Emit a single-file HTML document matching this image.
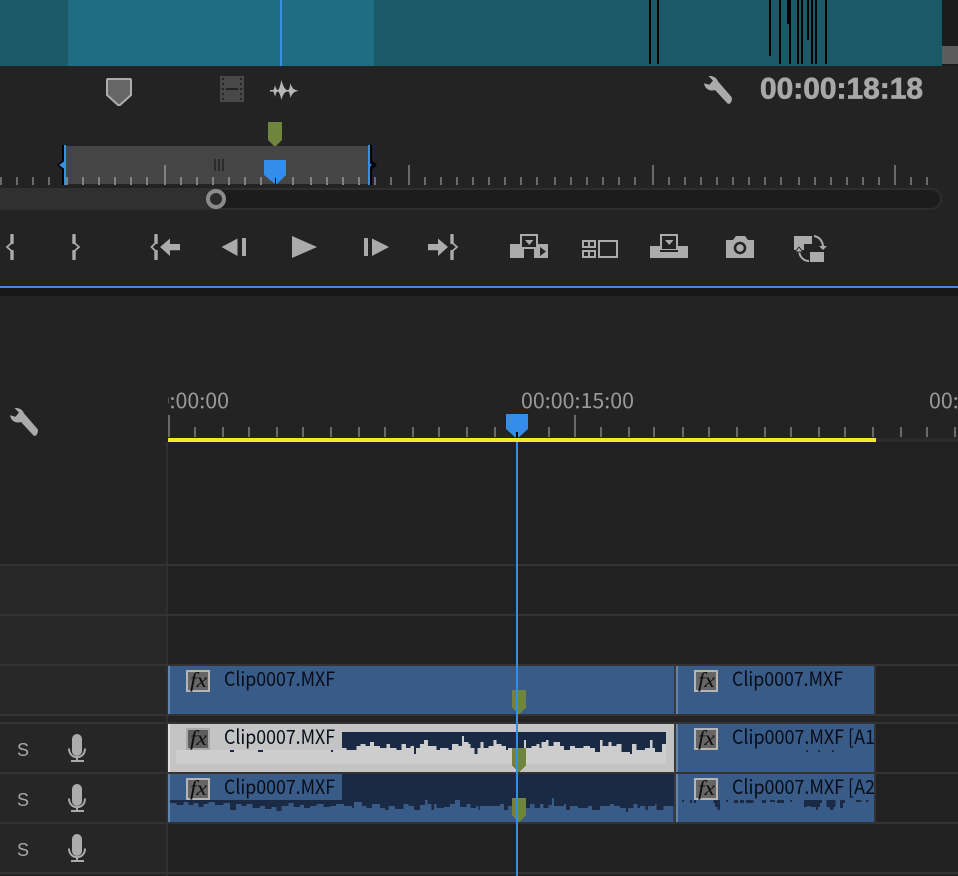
<!DOCTYPE html>
<html lang="en">
<head>
<meta charset="utf-8">
<title>Timeline</title>
<style>
html,body{margin:0;padding:0;background:#232323;width:958px;height:876px;overflow:hidden}
svg{display:block}
.c{font-family:"Noto Sans CJK JP","Liberation Sans",sans-serif;font-size:19.500px;fill:#060c16}
.r{font-family:"Noto Sans CJK JP","Liberation Sans",sans-serif;font-size:21px;fill:#9a9a9a}
.fx{font-family:"Liberation Serif",serif;font-style:italic;font-size:21px;fill:#0d0d0d}
.s{font-family:"Liberation Sans",sans-serif;font-size:18px;fill:#a8a8a8}
</style>
</head>
<body>
<svg width="958" height="876" viewBox="0 0 958 876" xmlns="http://www.w3.org/2000/svg">
<defs>
<clipPath id="rc"><rect x="168" y="380" width="790" height="40"/></clipPath>
<clipPath id="c2"><rect x="678" y="724" width="196" height="98"/></clipPath>
<g id="mic">
<rect x="72" y="734" width="10" height="22" rx="5" fill="#ababab"/>
<path d="M69 748.500C69 760 85 760 85 748.500" fill="none" stroke="#ababab" stroke-width="2"/>
<path d="M77 757V761M71 761H84" stroke="#ababab" stroke-width="2" fill="none"/>
</g>
<path id="gm" d="M0 0H14V18H13V19H12V20H11V21H10V22H9V23H8V24H6V23H5V22H4V21H3V20H2V19H1V18H0Z" fill="#6f843c"/>
<g id="fxb">
<rect x="187" y="671" width="22" height="20" fill="#666" stroke="#b5b5b5" stroke-width="2"/>
<text class="fx" x="190" y="687" textLength="17" lengthAdjust="spacingAndGlyphs">fx</text>
</g>
<path id="wr" d="M4.500 0C8 -.3 12 .5 14.300 5.700L27.500 21C29 23.500 26.500 29.500 23.500 27.500L11 14C7 15.500 1 14 0 7.300L5.500 8.800L9 4.500Z" fill="#ababab"/>
</defs>

<!-- base -->
<rect width="958" height="876" fill="#232323"/>

<!-- top teal -->
<rect x="0" y="0" width="942" height="66" fill="#1a5a68"/>
<rect x="68" y="0" width="306" height="66" fill="#206c82"/>
<rect x="942" y="0" width="16" height="66" fill="#1c1c1c"/>
<rect x="942" y="46" width="16" height="18" fill="#5c5c5c"/>
<rect x="280" y="0" width="2" height="66" fill="#3a8ee6"/>
<g fill="#000">
<rect x="649" y="0" width="2" height="64"/>
<rect x="657" y="0" width="2" height="64"/>
<rect x="769" y="0" width="2" height="56"/>
<rect x="779" y="0" width="2" height="64"/>
<rect x="787" y="0" width="3" height="24"/>
<rect x="789" y="0" width="2" height="64"/>
<rect x="797" y="0" width="2" height="64"/>
<rect x="801" y="0" width="2" height="64"/>
<rect x="807" y="0" width="2" height="40"/>
<rect x="811" y="0" width="2" height="64"/>
<rect x="815" y="0" width="2" height="64"/>
<rect x="825" y="0" width="2" height="64"/>
</g>

<!-- marker icon -->
<path d="M108 79H130Q131 79 131 80V95L120 105H118L107 95V80Q107 79 108 79Z" fill="#666" stroke="#adadad" stroke-width="2"/>
<!-- film icon -->
<rect x="220" y="76" width="24" height="26" fill="#484848"/>
<g fill="#232323">
<rect x="222" y="78" width="2" height="2"/><rect x="222" y="83" width="2" height="2"/><rect x="222" y="88" width="2" height="2"/><rect x="222" y="93" width="2" height="2"/><rect x="222" y="98" width="2" height="2"/>
<rect x="240" y="78" width="2" height="2"/><rect x="240" y="83" width="2" height="2"/><rect x="240" y="88" width="2" height="2"/><rect x="240" y="93" width="2" height="2"/><rect x="240" y="98" width="2" height="2"/>
<rect x="226" y="88" width="12" height="2"/>
</g>
<!-- audio icon -->
<path d="M270 90H273C274 90 274.500 87 275 85C275.500 87 276 89 277.500 90H278C279.500 89 280.500 84 281.500 80C282.500 84 284 89 287 90H288.500C289.500 89 290 86 290.500 83C291.500 87 293 90 298 90.500V91C293 91.500 291.500 95 290.500 98C290 95 289.500 92.500 288.500 91.500H287C284 92 282.500 96 281.500 100C280.500 96 279.500 92.500 278 91.500H277.500C276 92.500 275.500 95 275 97C274.500 95 274 92 273 91.500H270Z" fill="#b7b7b7"/>

<!-- timecode and wrench -->
<use href="#wr" x="704" y="76"/>
<text x="760" y="98.500" font-family="'Liberation Sans',sans-serif" font-weight="700" font-size="30" fill="#a8a8a8" stroke="#a8a8a8" stroke-width=".7" textLength="163" lengthAdjust="spacingAndGlyphs">00:00:18:18</text>

<!-- mini ruler selection -->
<path d="M268 122H282V140L276 146H274L268 140Z" fill="#6f843c"/>
<rect x="66" y="146" width="302" height="38" fill="#454545"/>
<rect x="62" y="145" width="2" height="40" fill="#000"/>
<rect x="370" y="145" width="2" height="40" fill="#000"/>
<path d="M64 159L57 165L64 171Z" fill="#000"/>
<path d="M370 159L377 165L370 171Z" fill="#000"/>
<path d="M66 160L59 165L66 170Z" fill="#3a8ee6"/>
<path d="M368 162L372 165L368 168Z" fill="#3a8ee6"/>
<rect x="64" y="145" width="2" height="40" fill="#3a8ee6"/>
<rect x="368" y="145" width="2" height="40" fill="#3a8ee6"/>
<path d="M215 159V171M219 159V171M223 159V171" stroke="#2b2b2b" stroke-width="2"/>

<!-- mini ruler ticks -->
<path shape-rendering="crispEdges" d="M1 177V185M17 177V185M33 177V185M49 177V185M375 177V185M391 177V185M425 177V185M441 177V185M457 177V185M473 177V185M489 177V185M505 177V185M521 177V185M537 177V185M555 177V185M571 177V185M587 177V185M603 177V185M619 177V185M635 177V185M669 177V185M685 177V185M701 177V185M717 177V185M733 177V185M749 177V185M765 177V185M781 177V185M799 177V185M815 177V185M831 177V185M847 177V185M863 177V185M879 177V185M911 177V185M927 177V185M409 165V185M653 165V185M895 165V185" stroke="#6a6a6a" stroke-width="2" fill="none"/>
<path shape-rendering="crispEdges" d="M67 177V185M83 177V185M99 177V185M115 177V185M131 177V185M147 177V185M181 177V185M197 177V185M213 177V185M229 177V185M245 177V185M261 177V185M293 177V185M311 177V185M327 177V185M343 177V185M359 177V185M165 165V185" stroke="#828282" stroke-width="2" fill="none"/>

<!-- mini playhead -->
<path d="M264 160H286V175L277 184H275L264 175Z" fill="#348de8"/>
<rect x="275" y="178" width="1" height="6" fill="#000"/>

<!-- scrollbar -->
<rect x="-20" y="189" width="961" height="20" rx="10" fill="#1c1c1c" stroke="#2d2d2d" stroke-width="2"/>
<rect x="0" y="188" width="216" height="22" fill="#303030"/>
<circle cx="216" cy="199" r="8" fill="#2c2c2c" stroke="#8c8c8c" stroke-width="4"/>

<!-- transport -->
<g fill="#ababab">
<!-- mark in -->
<rect x="10.300" y="234" width="3.400" height="10" rx=".8"/>
<rect x="10.300" y="250" width="3.400" height="10" rx=".8"/>
<path d="M11 243.500L7 247L11 250.500" fill="none" stroke="#ababab" stroke-width="1.800"/>
<!-- mark out -->
<rect x="72.300" y="234" width="3.400" height="10" rx=".8"/>
<rect x="72.300" y="250" width="3.400" height="10" rx=".8"/>
<path d="M75 243.500L79 247L75 250.500" fill="none" stroke="#ababab" stroke-width="1.800"/>
<!-- go to in -->
<rect x="154.300" y="234" width="3.400" height="10" rx=".8"/>
<rect x="154.300" y="250" width="3.400" height="10" rx=".8"/>
<path d="M155 243.500L151.500 247L155 250.500" fill="none" stroke="#ababab" stroke-width="1.800"/>
<path d="M160 247L170 238.500V244H180V250.300H170V256Z"/>
<path d="M221.500 247L237.500 238.500V256Z"/>
<rect x="242" y="238" width="4" height="18" rx=".5"/>
<path d="M292 236L317 247L292 258Z"/>
<rect x="364" y="238" width="4" height="18" rx=".5"/>
<path d="M372 238.500L389 247L372 256Z"/>
<path d="M448 247L438 238.500V244H428V250.300H438V256Z"/>
<!-- go to out -->
<rect x="450.300" y="234" width="3.400" height="10" rx=".8"/>
<rect x="450.300" y="250" width="3.400" height="10" rx=".8"/>
<path d="M453 243.500L457 247L453 250.500" fill="none" stroke="#ababab" stroke-width="1.800"/>

<!-- insert -->
<rect x="510" y="244" width="14" height="14"/>
<rect x="534" y="244" width="14" height="14"/>
<rect x="521" y="235" width="16" height="13" fill="#232323" stroke="#ababab" stroke-width="2"/>
<path d="M525 240H533.500L529.250 245Z"/>
<path d="M540 247L546 251.500L540 256Z" fill="#232323"/>

<!-- compare -->
<rect x="582" y="240" width="14" height="8"/>
<rect x="582" y="250" width="14" height="8"/>
<g fill="#232323">
<rect x="584" y="242" width="4" height="4"/><rect x="590" y="242" width="4" height="4"/>
<rect x="584" y="252" width="4" height="4"/><rect x="590" y="252" width="4" height="4"/>
</g>
<rect x="599" y="241" width="18" height="16" fill="none" stroke="#ababab" stroke-width="2"/>

<!-- overwrite -->
<rect x="650" y="246" width="38" height="12"/>
<rect x="661" y="235" width="16" height="15" fill="#232323" stroke="#ababab" stroke-width="2"/>
<rect x="660" y="250" width="18" height="2" fill="#232323"/>
<path d="M665 240H673.500L669.250 245Z"/>

<!-- camera -->
<path d="M726 240H733L736 236H745L748 240H754V258H726Z"/>
<circle cx="740" cy="248" r="5" fill="#ababab" stroke="#232323" stroke-width="2.500"/>

<!-- swap -->
<rect x="810" y="252" width="14" height="10"/>
<path d="M794 236H812V244H804V250H794Z"/>
<g fill="none" stroke="#ababab" stroke-width="2">
<path d="M814 236C820 237 823 242 823 247"/>
<path d="M799 250C799 256 803 261 809 261"/>
</g>
<path d="M819 246H827L823 250Z"/>
<path d="M795 252L799 247L803 252Z" stroke="#232323" stroke-width="1"/>
</g>

<!-- divider under monitor -->
<rect x="0" y="286" width="958" height="2" fill="#3a8ee6"/>
<rect x="0" y="288" width="958" height="8" fill="#171717"/>

<!-- timeline header -->
<use href="#wr" x="10" y="408"/>
<g clip-path="url(#rc)">
<text class="r" x="116" y="408" textLength="113" lengthAdjust="spacingAndGlyphs">00:00:00:00</text>
<text class="r" x="521" y="408" textLength="113" lengthAdjust="spacingAndGlyphs">00:00:15:00</text>
<text class="r" x="929" y="408" textLength="113" lengthAdjust="spacingAndGlyphs">00:00:30:00</text>
</g>
<path shape-rendering="crispEdges" d="M195 427V437M223 427V437M249 427V437M277 427V437M303 427V437M331 427V437M359 427V437M385 427V437M413 427V437M439 427V437M467 427V437M495 427V437M549 427V437M601 427V437M629 427V437M654 427V437M683 427V437M709 427V437M737 427V437M765 427V437M791 427V437M819 427V437M845 427V437M873 427V437M901 427V437M927 427V437M955 427V437M169 415V437M575 415V437" stroke="#6a6a6a" stroke-width="2" fill="none"/>
<rect x="876" y="438" width="82" height="4" fill="#2a2a2a"/>

<!-- tracks background -->
<rect x="0" y="442" width="166" height="434" fill="#232323"/>
<rect x="168" y="442" width="790" height="434" fill="#212121"/>
<rect x="0" y="566" width="166" height="98" fill="#272727"/>
<rect x="0" y="666" width="166" height="48" fill="#272727"/>
<rect x="0" y="724" width="166" height="148" fill="#262626"/>
<rect x="0" y="716" width="958" height="6" fill="#242424"/>
<rect x="166" y="442" width="2" height="434" fill="#2f2f2f"/>
<g fill="#333">
<rect x="0" y="564" width="958" height="2"/>
<rect x="0" y="614" width="958" height="2"/>
<rect x="0" y="664" width="958" height="2"/>
<rect x="0" y="714" width="958" height="2"/>
<rect x="0" y="722" width="958" height="2"/>
<rect x="0" y="772" width="958" height="2"/>
<rect x="0" y="822" width="958" height="2"/>
<rect x="0" y="872" width="958" height="2"/>
</g>

<!-- V1 clips -->
<rect x="168" y="666" width="506" height="48" fill="#385b87"/>
<rect x="168" y="666" width="2" height="48" fill="#6384ad"/>
<rect x="676" y="666" width="198" height="48" fill="#385b87"/>
<rect x="676" y="666" width="2" height="48" fill="#6384ad"/>

<!-- A1 clips -->
<rect x="168" y="724" width="506" height="48" fill="#c4c4c4"/>
<rect x="168" y="724" width="2" height="48" fill="#e0e0e0"/>
<rect x="176" y="750" width="490" height="14" fill="#cdcdcd"/>
<rect x="342" y="732" width="324" height="24" fill="#1b2a44"/>
<g transform="translate(340,660) scale(.33333)" shape-rendering="crispEdges">
<path fill="#cdcdcd" d="M6 312V264H20V270H50V258H62V252H76V258H90V246H102V258H120V264H140V252H150V264H170V270H185V252H198V264H212V258H222V282H228V264H240V252H252V240H264V258H290V270H300V264H325V270H336V252H355V258H366V228H372V246H385V252H392V264H403V282H412V264H422V246H430V264H445V258H460V240H470V252H485V258H498V270H504V264H552V240H558V264H575V258H590V252H598V264H605V246H618V240H625V258H640V246H660V258H672V270H690V258H705V264H730V258H750V264H765V276H780V240H788V258H805V246H815V258H830V252H845V276H870V282H876V252H890V270H915V264H930V240H938V264H945V276H966V252H978V312Z"/>
</g>
<g fill="#1b2a44">
<rect x="230" y="750" width="4" height="2"/><rect x="258" y="750" width="5" height="2"/><rect x="331" y="750" width="2" height="2"/>
</g>
<rect x="676" y="724" width="198" height="48" fill="#385b87"/>
<rect x="676" y="724" width="2" height="48" fill="#6384ad"/>
<g fill="#1b2a44">
<rect x="806" y="750" width="2" height="2"/><rect x="818" y="750" width="2" height="2"/><rect x="832" y="750" width="2" height="2"/>
</g>

<!-- A2 clips -->
<rect x="168" y="774" width="506" height="48" fill="#1b2a44"/>
<rect x="168" y="774" width="174" height="26" fill="#385b87"/>
<g transform="translate(340,660) scale(.33333)" shape-rendering="crispEdges">
<path fill="#385b87" d="M-512 486V429H-490V435H-470V426H-455V435H-440V429H-425V441H-410V432H-395V426H-375V435H-350V429H-330V450H-312V432H-295V438H-280V432H-262V444H-240V438H-225V447H-205V441H-190V453H-175V438H-155V429H-140V441H-120V435H-108V444H-90V438H-70V432H-50V441H-30V438H-12V432H0V432H12V438H36V444H42V426H66V438H80V444H96V432H120V444H135V450H145V438H165V447H190V432H205V438H222V450H240V435H255V420H262V432H275V450H282V432H290V444H312V441H330V432H345V420H360V441H380V432H392V444H408V438H416V450H420V438H480V432H492V450H504V438H516V450H558V444H570V432H584V444H600V432H610V444H625V435H636V414H642V438H672V432H678V450H690V438H714V444H744V438H756V450H780V438H810V432H822V438H840V444H858V456H864V444H880V432H892V444H900V438H916V450H924V438H945V432H950V450H970V438H1000V486Z"/>
</g>
<rect x="168" y="774" width="2" height="48" fill="#6384ad"/>
<rect x="676" y="774" width="198" height="48" fill="#385b87"/>
<rect x="676" y="774" width="2" height="48" fill="#6384ad"/>
<g transform="translate(660,660) scale(.33333)" shape-rendering="crispEdges">
<path fill="#1b2a44" d="M66 420H72V426H66ZM90 420H96V429H90ZM102 420H108V429H102ZM145 420H160V429H165V441H172V450H180V420ZM198 420H204V426H198ZM222 420H234V429H222ZM240 420H252V429H240ZM258 420H280V429H258ZM306 420H318V429H306ZM330 420H345V426H330ZM351 420H372V429H351ZM390 420H396V426H390ZM432 420H486V429H480V441H474V450H468V441H450V438H441V441H432ZM500 420H526V441H520V450H510V441H500ZM540 420H555V429H549V444H540ZM588 420H605V426H588ZM618 420H625V426H618Z"/>
</g>

<!-- separators / clip ends -->
<rect x="674" y="666" width="2" height="48" fill="#3a3a3a"/>
<rect x="674" y="724" width="2" height="98" fill="#3a3a3a"/>
<rect x="874" y="666" width="2" height="48" fill="#333"/>
<rect x="874" y="724" width="2" height="98" fill="#333"/>

<!-- fx badges -->
<use href="#fxb"/>
<use href="#fxb" x="508"/>
<g>
<rect x="186" y="728" width="24" height="22" fill="#a8a8a8"/>
<rect x="188" y="730" width="20" height="18" fill="#5e5e5e"/>
<text class="fx" x="190" y="745" textLength="17" lengthAdjust="spacingAndGlyphs">fx</text>
</g>
<use href="#fxb" x="508" y="58"/>
<use href="#fxb" y="108"/>
<use href="#fxb" x="508" y="108"/>

<!-- clip labels -->
<text class="c" x="224" y="686" textLength="111" lengthAdjust="spacingAndGlyphs">Clip0007.MXF</text>
<text class="c" x="732" y="686" textLength="111" lengthAdjust="spacingAndGlyphs">Clip0007.MXF</text>
<text class="c" x="224" y="744" textLength="111" lengthAdjust="spacingAndGlyphs">Clip0007.MXF</text>
<text class="c" x="224" y="794" textLength="111" lengthAdjust="spacingAndGlyphs">Clip0007.MXF</text>
<g clip-path="url(#c2)">
<text class="c" x="732" y="744" textLength="149" lengthAdjust="spacingAndGlyphs">Clip0007.MXF [A1]</text>
<text class="c" x="732" y="794" textLength="149" lengthAdjust="spacingAndGlyphs">Clip0007.MXF [A2]</text>
</g>

<!-- green markers -->
<use href="#gm" x="512" y="690"/>
<use href="#gm" x="512" y="748"/>
<use href="#gm" x="512" y="798"/>

<!-- track header icons -->
<text class="s" x="17" y="756" textLength="12" lengthAdjust="spacingAndGlyphs">S</text>
<text class="s" x="17" y="806" textLength="12" lengthAdjust="spacingAndGlyphs">S</text>
<text class="s" x="17" y="856" textLength="12" lengthAdjust="spacingAndGlyphs">S</text>
<use href="#mic"/>
<use href="#mic" y="50"/>
<use href="#mic" y="100"/>

<!-- main playhead -->
<rect x="516" y="438" width="2" height="438" fill="#348de8"/>
<path d="M506 414H528V429L518 438H516L506 429Z" fill="#348de8"/>
<rect x="516" y="432" width="2" height="6" fill="#000"/>
<rect x="168" y="438" width="708" height="4" fill="#f2e92b"/>
</svg>
</body>
</html>
